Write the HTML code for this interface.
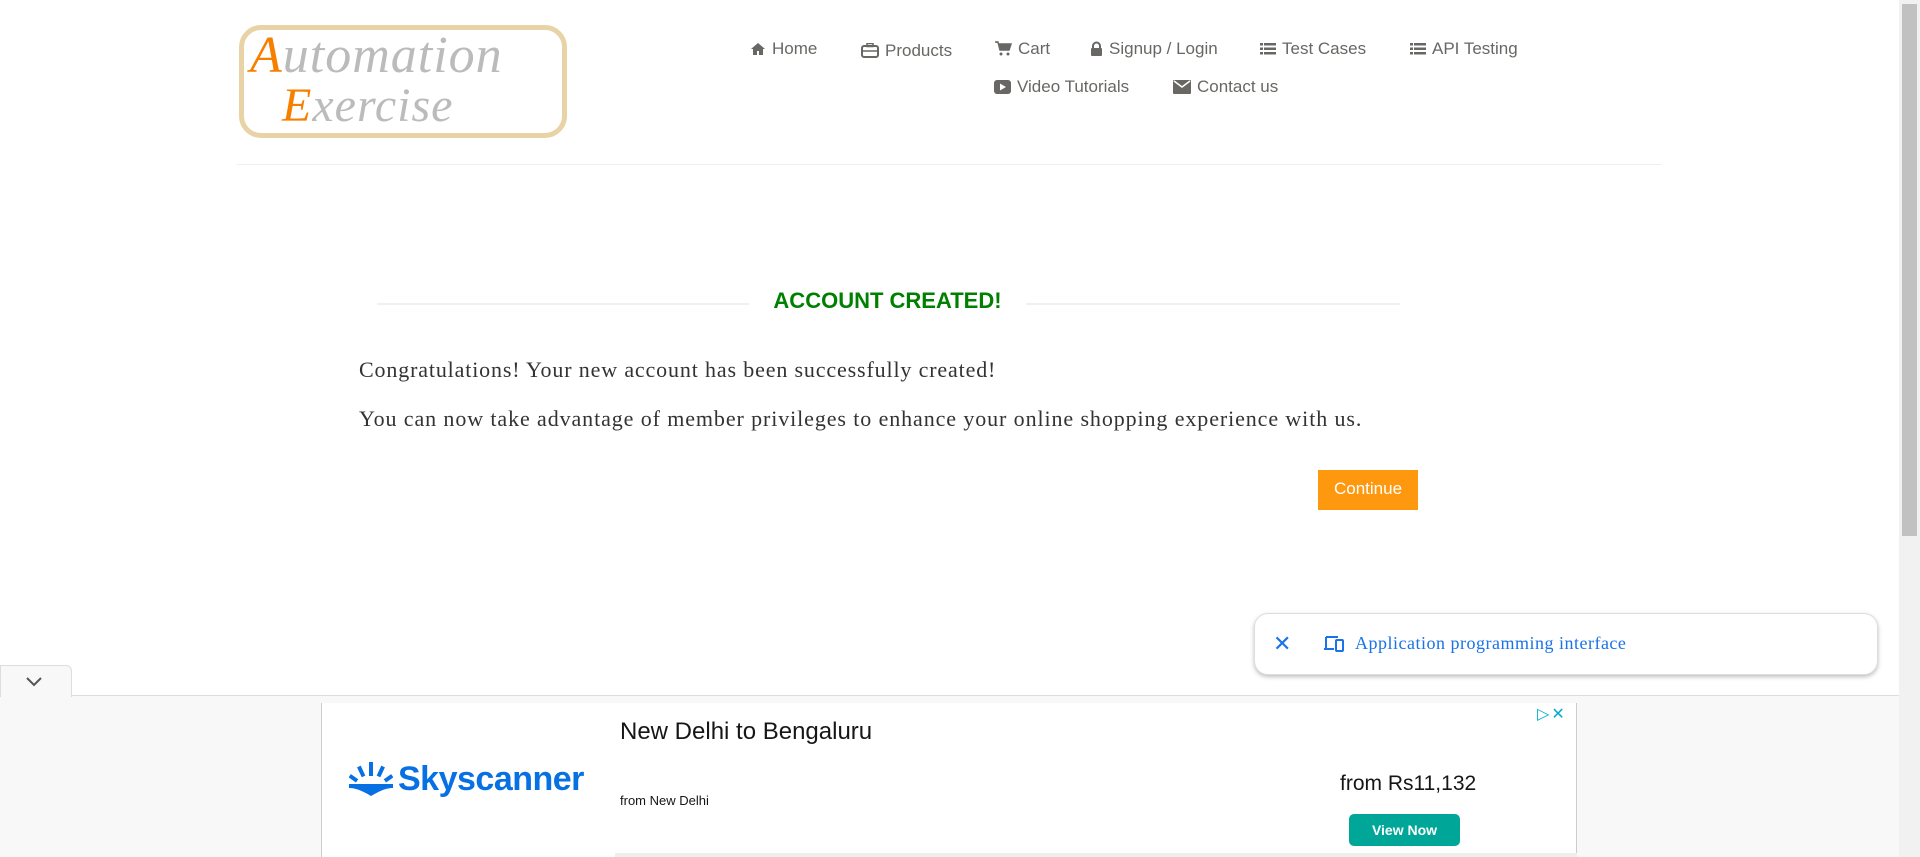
<!DOCTYPE html>
<html><head><meta charset="utf-8"><style>
*{margin:0;padding:0;box-sizing:border-box}
body{width:1920px;height:857px;overflow:hidden;background:#fff;position:relative;font-family:"Liberation Sans",sans-serif}
.abs{position:absolute}
.nav{font-size:17px;color:#696763;white-space:nowrap}
.nav svg{vertical-align:-2px;margin-right:6px}
</style></head><body>
<!-- logo -->
<div class="abs" style="left:239px;top:25px;width:328px;height:113px;border:5px solid #e8d3a6;border-radius:22px;background:#fff"></div>
<div class="abs" style="left:250px;top:30px;font-family:'Liberation Serif',serif;font-style:italic;font-size:52px;color:#bbb;letter-spacing:1px;line-height:52px"><span style="color:#f77f00">A</span>utomation</div>
<div class="abs" style="left:282px;top:82px;font-family:'Liberation Serif',serif;font-style:italic;font-size:48px;color:#bbb;letter-spacing:1px;line-height:48px"><span style="color:#f77f00">E</span>xercise</div>
<!-- nav -->
<div class="abs nav" style="left:750px;top:39px"><svg width="16" height="14" viewBox="0 0 16 14"><path d="M8 1L1 7h2v6h4V9h2v4h4V7h2z" fill="#696763"/></svg>Home</div>
<div class="abs nav" style="left:861px;top:41px"><svg width="18" height="15" viewBox="0 0 18 15"><rect x="1" y="3" width="16" height="11" rx="2" fill="none" stroke="#696763" stroke-width="2"/><rect x="6" y="0.5" width="6" height="3" fill="none" stroke="#696763" stroke-width="1.5"/><line x1="1" y1="8" x2="17" y2="8" stroke="#696763" stroke-width="1.5"/></svg>Products</div>
<div class="abs nav" style="left:995px;top:39px"><svg width="17" height="15" viewBox="0 0 17 15"><path d="M0 1h3l2 8h9l2-6H4" fill="#696763" stroke="#696763" stroke-width="1.5"/><circle cx="6" cy="13" r="1.5" fill="#696763"/><circle cx="13" cy="13" r="1.5" fill="#696763"/></svg>Cart</div>
<div class="abs nav" style="left:1090px;top:39px"><svg width="13" height="15" viewBox="0 0 13 15"><path d="M3 7V5a3.5 3.5 0 0 1 7 0v2" fill="none" stroke="#696763" stroke-width="2"/><rect x="1" y="7" width="11" height="8" rx="1" fill="#696763"/></svg>Signup / Login</div>
<div class="abs nav" style="left:1260px;top:39px"><svg width="16" height="14" viewBox="0 0 16 14"><g fill="#696763"><rect x="0" y="1" width="3" height="2.5"/><rect x="4" y="1" width="12" height="2.5"/><rect x="0" y="5.5" width="3" height="2.5"/><rect x="4" y="5.5" width="12" height="2.5"/><rect x="0" y="10" width="3" height="2.5"/><rect x="4" y="10" width="12" height="2.5"/></g></svg>Test Cases</div>
<div class="abs nav" style="left:1410px;top:39px"><svg width="16" height="14" viewBox="0 0 16 14"><g fill="#696763"><rect x="0" y="1" width="3" height="2.5"/><rect x="4" y="1" width="12" height="2.5"/><rect x="0" y="5.5" width="3" height="2.5"/><rect x="4" y="5.5" width="12" height="2.5"/><rect x="0" y="10" width="3" height="2.5"/><rect x="4" y="10" width="12" height="2.5"/></g></svg>API Testing</div>
<div class="abs nav" style="left:994px;top:77px"><svg width="17" height="14" viewBox="0 0 17 14"><rect x="0" y="0" width="17" height="14" rx="3" fill="#696763"/><path d="M6 3.5v7l6-3.5z" fill="#fff"/></svg>Video Tutorials</div>
<div class="abs nav" style="left:1173px;top:77px"><svg width="18" height="14" viewBox="0 0 18 14"><rect x="0" y="0" width="18" height="14" rx="1" fill="#696763"/><path d="M1 1l8 6 8-6" fill="none" stroke="#fff" stroke-width="1.5"/></svg>Contact us</div>
<div class="abs" style="left:236px;top:164px;width:1426px;height:1px;background:#f0f0f0"></div>
<!-- content -->
<div class="abs" style="left:377px;top:303px;width:372px;height:2px;background:#f0f0ee"></div>
<div class="abs" style="left:1026px;top:303px;width:374px;height:2px;background:#f0f0ee"></div>
<div class="abs" style="left:749px;top:288px;width:277px;text-align:center;color:#008000;font-weight:bold;font-size:22px">ACCOUNT CREATED!</div>
<div class="abs" style="left:359px;top:357px;font-family:'Liberation Serif',serif;font-size:22px;letter-spacing:0.85px;color:#333;white-space:nowrap">Congratulations! Your new account has been successfully created!</div>
<div class="abs" style="left:359px;top:406px;font-family:'Liberation Serif',serif;font-size:22px;letter-spacing:0.9px;color:#333;white-space:nowrap">You can now take advantage of member privileges to enhance your online shopping experience with us.</div>
<div class="abs" style="left:1318px;top:470px;width:100px;height:40px;background:#fe980f;color:#fff;font-size:17px;text-align:center;line-height:38px">Continue</div>
<!-- scrollbar -->
<div class="abs" style="left:1899px;top:0;width:21px;height:857px;background:#f1f1f1"></div>
<div class="abs" style="left:1902px;top:4px;width:15px;height:532px;background:#c1c1c1"></div>
<!-- popup -->
<div class="abs" style="left:1254px;top:613px;width:624px;height:62px;background:#fff;border:1px solid #ddd;border-radius:14px;box-shadow:0 2px 4px rgba(0,0,0,.25)"></div>
<div class="abs" style="left:1273px;top:631px;color:#1a73e8;font-size:22px">✕</div>
<svg class="abs" style="left:1323px;top:635px" width="22" height="18" viewBox="0 0 22 18"><path d="M3 2h12M3 2v11M1 14h10" fill="none" stroke="#1a73e8" stroke-width="2"/><rect x="13" y="5" width="7" height="11" rx="1" fill="none" stroke="#1a73e8" stroke-width="2"/></svg>
<div class="abs" style="left:1355px;top:633px;color:#1a73e8;font-family:'Liberation Serif',serif;font-size:18px;letter-spacing:0.5px">Application programming interface</div>
<!-- bottom -->
<div class="abs" style="left:0;top:695px;width:1899px;height:162px;background:#f8f8f8;border-top:1px solid #ddd"></div>
<div class="abs" style="left:0;top:665px;width:72px;height:32px;background:#f8f8f8;border:1px solid #ddd;border-bottom:none;border-radius:0 6px 0 0"></div>
<svg class="abs" style="left:26px;top:677px" width="16" height="10" viewBox="0 0 16 10"><path d="M1 1l7 7 7-7" fill="none" stroke="#555" stroke-width="2"/></svg>
<div class="abs" style="left:321px;top:703px;width:1256px;height:154px;background:#fff;border-left:1px solid #ccc;border-right:1px solid #ccc"></div>
<div class="abs" style="left:615px;top:853px;width:962px;height:4px;background:#eee"></div>
<svg class="abs" style="left:349px;top:760px" width="44" height="38" viewBox="0 0 44 38"><g fill="#0770e3"><rect x="20" y="2" width="4" height="14"/><rect x="10" y="6" width="4" height="11" transform="rotate(-25 12 11)"/><rect x="30" y="6" width="4" height="11" transform="rotate(25 32 11)"/><rect x="2" y="14" width="4" height="9" transform="rotate(-55 4 18)"/><rect x="38" y="14" width="4" height="9" transform="rotate(55 40 18)"/><path d="M0 24h44v4c-6 0-12 2-22 8C12 30 6 28 0 28z"/></g></svg>
<div class="abs" style="left:398px;top:760px;color:#0770e3;font-size:34px;font-weight:bold;letter-spacing:-0.5px">Skyscanner</div>
<div class="abs" style="left:620px;top:718px;color:#161616;font-size:24px">New Delhi to Bengaluru</div>
<div class="abs" style="left:620px;top:793px;color:#161616;font-size:13px">from New Delhi</div>
<div class="abs" style="left:1340px;top:772px;color:#161616;font-size:21px">from Rs11,132</div>
<div class="abs" style="left:1349px;top:814px;width:111px;height:32px;background:#00a698;border-radius:5px;color:#fff;font-weight:bold;font-size:14px;text-align:center;line-height:32px">View Now</div>
<div class="abs" style="left:1537px;top:704px;color:#00aecd;font-size:16px">▷<span style="margin-left:2px">✕</span></div>
</body></html>
